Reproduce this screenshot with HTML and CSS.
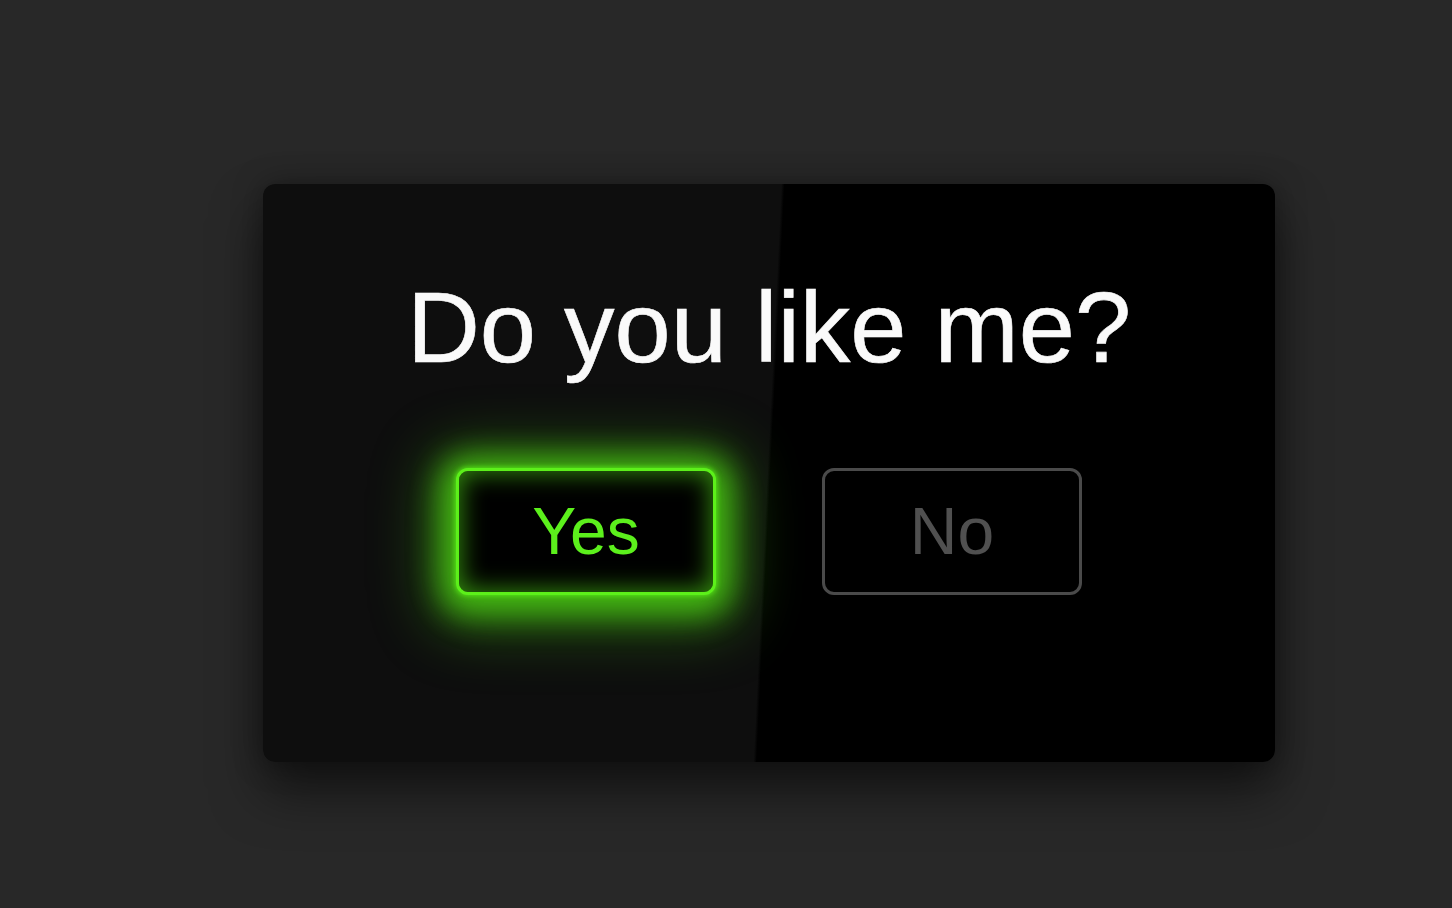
FILE: index.html
```html
<!DOCTYPE html>
<html lang="en">
<head>
<meta charset="utf-8">
<title>Do you like me?</title>
<link rel="stylesheet" href="styles.css">
</head>
<body>
<main class="stage">
  <section class="card">
    <h1 class="question">Do you like me?</h1>
    <div class="actions">
      <button class="btn btn-yes" type="button">Yes</button>
      <button class="btn btn-no" type="button">No</button>
    </div>
  </section>
</main>
</body>
</html>
```
FILE: styles.css
```css
html, body {
  margin: 0;
  padding: 0;
  background: #282828;
  height: 100%;
  overflow: hidden;
}

body {
  font-family: "Liberation Sans", Arial, sans-serif;
}

.stage {
  padding: 184px 0 0 263px;
}

.card {
  width: 1012px;
  height: 578px;
  box-sizing: border-box;
  border-radius: 12px;
  background: linear-gradient(92.77deg, #0e0e0e 49.85%, #000 50.15%);
  box-shadow: 0 30px 50px rgba(0, 0, 0, 0.5), 0 0 30px rgba(0, 0, 0, 0.35);
  display: flex;
  flex-direction: column;
  align-items: center;
  padding-top: 93px;
}

.question {
  margin: 0;
  color: #fafafa;
  font-weight: 400;
  font-size: 101px;
  line-height: 100px;
  letter-spacing: 0;
  -webkit-text-stroke: 0.6px #fafafa;
}

.actions {
  display: flex;
  gap: 106px;
  margin-top: 91px;
}

.btn {
  width: 260px;
  height: 127px;
  box-sizing: border-box;
  border-radius: 12px;
  background: #000;
  font-family: "Liberation Sans", Arial, sans-serif;
  font-size: 66px;
  line-height: 1;
  padding: 0 0 2px;
  cursor: pointer;
}

.btn-yes {
  border: 3px solid #5cf01a;
  color: #5cf01c;
  box-shadow:
    0 0 5px 1px rgba(90, 240, 25, 0.8),
    0 4px 30px 16px rgba(80, 220, 20, 0.75),
    0 8px 60px 26px rgba(70, 200, 20, 0.4),
    inset 0 0 24px 2px rgba(85, 232, 24, 0.6);
}

.btn-no {
  border: 3px solid #4a4a4a;
  color: #505050;
}
```
